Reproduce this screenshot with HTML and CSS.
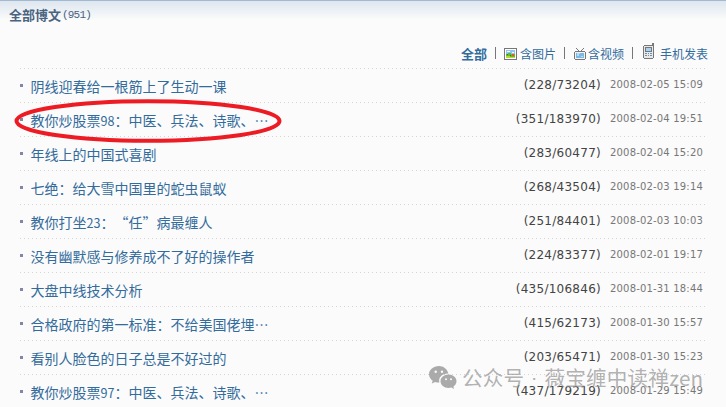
FILE: index.html
```html
<!DOCTYPE html>
<html lang="zh-CN">
<head>
	<meta charset="UTF-8">
	<title>全部博文</title>
	<link rel="stylesheet" href="styles.css">
</head>
<body>
	<div class="panel">
		<div class="head"><h1>全部博文</h1><span class="total">(951)</span></div>
		<div class="filter">
			<a class="current">全部</a>
			<i class="sep"></i>
			<a class="pic">
				<svg width="13" height="12" viewBox="0 0 13 12" shape-rendering="crispEdges">
					<path fill="#777" d="M0 0h13v12H0z"/><path fill="#fff" d="M1 1h11v10H1z"/>
					<path fill="#8cc4f5" d="M2 2h9v4H2z"/><path fill="#fff" d="M3 3h3v1H3zM8 4h2v1H8z"/>
					<path fill="#64b832" d="M2 6h2V5h3v1h4v4H2z"/><path fill="#b9d92c" d="M2 8h4v1h5v1H2z"/>
					<path fill="#e15a2c" d="M8 6h2v2H8z"/><path fill="#287d35" d="M3 6h1v1H3zM6 7h1v1H6z"/>
				</svg>含图片</a>
			<i class="sep"></i>
			<a class="tv">
				<svg width="12" height="12" viewBox="0 0 12 12" shape-rendering="crispEdges">
					<path fill="#777" d="M2 0h1v1h1v1h1v1h2V2h1V1h1V0h1v1H9v1H8v1h3v1h1v7h-1v1H1v-1H0V4h1V3h3V2H3V1H2z"/>
					<path fill="#f3f3f3" d="M1 4h10v7H1z"/><path fill="#7bb9e8" d="M2 5h8v5H2z"/>
					<path fill="#b5dcf7" d="M3 5h3v1H5v2H3zM7 8h2v1H7z"/>
				</svg>含视频</a>
			<i class="sep"></i>
			<a class="phone">
				<svg width="11" height="16" viewBox="0 0 11 16" shape-rendering="crispEdges">
					<path fill="#777" d="M9 0h2v15h-1v1H1v-1H0V3h1V2h8z"/><path fill="#e9e9e9" d="M1 3h9v12H1z"/>
					<path fill="#777" d="M2 4h7v5H2z"/><path fill="#a4d3f5" d="M3 5h5v3H3z"/>
					<path fill="#6c8eaa" d="M2 10h2v1H2zM5 10h1v1H5zM7 10h2v1H7zM2 12h2v1H2zM5 12h1v1H5zM7 12h2v1H7z"/>
				</svg>手机发表</a>
		</div>
		<ul class="list">
			<li><a class="title">阴线迎春给一根筋上了生动一课</a><span class="count">(228/73204)</span><span class="time">2008-02-05 15:09</span></li>
			<li><a class="title">教你炒股票<b>98</b>：中医、兵法、诗歌、…</a><span class="count">(351/183970)</span><span class="time">2008-02-04 19:51</span></li>
			<li><a class="title">年线上的中国式喜剧</a><span class="count">(283/60477)</span><span class="time">2008-02-04 15:20</span></li>
			<li><a class="title">七绝：给大雪中国里的蛇虫鼠蚁</a><span class="count">(268/43504)</span><span class="time">2008-02-03 19:14</span></li>
			<li><a class="title">教你打坐<b>23</b>：“任”病最缠人</a><span class="count">(251/84401)</span><span class="time">2008-02-03 10:03</span></li>
			<li><a class="title">没有幽默感与修养成不了好的操作者</a><span class="count">(224/83377)</span><span class="time">2008-02-01 19:17</span></li>
			<li><a class="title">大盘中线技术分析</a><span class="count">(435/106846)</span><span class="time">2008-01-31 18:44</span></li>
			<li><a class="title">合格政府的第一标准：不给美国佬埋…</a><span class="count">(415/62173)</span><span class="time">2008-01-30 15:57</span></li>
			<li><a class="title">看别人脸色的日子总是不好过的</a><span class="count">(203/65471)</span><span class="time">2008-01-30 15:23</span></li>
			<li><a class="title">教你炒股票<b>97</b>：中医、兵法、诗歌、…</a><span class="count">(437/179219)</span><span class="time">2008-01-29 15:49</span></li>
		</ul>
	</div>

	<svg class="circle" width="268" height="44" viewBox="0 0 268 44">
		<ellipse cx="134" cy="22" rx="131.5" ry="19.8" fill="none" stroke="#ed1c24" stroke-width="4"/>
	</svg>

	<div class="watermark">
		<svg width="28" height="23" viewBox="0 0 28 23">
			<path fill="#aaa" d="M10 0C4.400 0 0 3.700 0 8.300c0 2.600 1.400 4.900 3.700 6.400L2.800 17.600l3.400-1.700c1.400.4 2.700.6 4.200.5C9 11.500 13 7.400 19.300 7.500 18.500 3.200 14.600 0 10 0z"/>
			<path fill="#aaa" d="M19.500 8.500c-4.500 0-8 3-8 6.700s3.500 6.700 8 6.700c1 0 2-.2 2.900-.5l2.700 1.500-.7-2.500c1.900-1.200 3.100-3.100 3.100-5.200 0-3.700-3.500-6.700-8-6.700z"/>
			<g fill="#fbfbfb"><circle cx="6.700" cy="5.700" r="1.200"/><circle cx="13" cy="5.700" r="1.200"/><circle cx="17" cy="13.200" r="1"/><circle cx="22" cy="13.200" r="1"/></g>
		</svg>
		<span>公众号<i class="dot">·</i>薇宝缠中读禅zen</span>
	</div>
</body>
</html>
```
FILE: styles.css
```css
html, body { margin: 0; padding: 0; overflow: hidden; }
body { position: relative; width: 726px; height: 407px; background: #fbfbfb; font-family: "Noto Sans CJK SC", sans-serif; font-size: 12px; color: #336b9c; }

.panel { box-sizing: border-box; height: 407px; border-top: 1px solid #a3b9d1; background: linear-gradient(#dde6ef, #fbfbfb 19px); overflow: hidden; }
.head { display: flex; align-items: center; height: 28px; padding-left: 9px; color: #4a6380; }
.head h1 { margin: -2px 0 0; font-size: 13px; font-weight: bold; }
.head .total { margin-left: 1px; font: 11px/14px "Liberation Mono", monospace; letter-spacing: -0.8px; }

.filter { display: flex; justify-content: flex-end; align-items: center; height: 20px; margin-top: 14px; padding: 0 18px 5px 0; line-height: 18px; }
.filter a { display: flex; align-items: center; padding-top: 1px; }
.filter .current { font-size: 13px; font-weight: bold; }
.filter svg { margin-right: 3px; }
.filter .tv svg { margin-right: 2px; }
.filter .phone svg { margin-right: 6px; margin-bottom: 5px; }
.sep { width: 1px; height: 12px; margin: 0 8px; background: #777; }
.filter .tv { margin-left: 1px; }
.filter .phone { margin-left: 2px; }

.list { list-style: none; margin: 0; padding: 0 20px; }
.list li { display: flex; align-items: center; box-sizing: border-box; height: 34px; padding: 4px 2px 0 0; background: repeating-linear-gradient(90deg, #d5d5d5 0 1px, transparent 1px 4px) top left / 100% 1px no-repeat; }
.list li::before { content: ""; width: 3px; height: 3px; margin: 0 7.5px 4px 0; background: #8284aa; }
.title { flex: 1; margin-top: -2px; font-size: 14px; line-height: 20px; text-spacing-trim: space-all; }
.title b { font-weight: normal; font-size: 12.6px; }
.count { font: 12px/16px "DejaVu Sans", sans-serif; letter-spacing: 0.26px; color: #444; margin-bottom: 4px; }
.time { width: 94px; margin: 0 0 4px 9px; font: 10px/16px "DejaVu Sans", sans-serif; letter-spacing: 0.18px; color: #777; white-space: nowrap; }

.circle { position: absolute; left: 14px; top: 99px; }

.watermark { position: absolute; left: 429px; top: 363px; display: flex; align-items: center; height: 28px; font-size: 20.6px; letter-spacing: 0.2px; color: rgba(140, 140, 140, 0.68); white-space: nowrap; }
.watermark span { margin-left: 5px; }
.watermark .dot { display: inline-block; width: 20px; font-family: Roboto, sans-serif; font-style: normal; text-align: center; }
```
